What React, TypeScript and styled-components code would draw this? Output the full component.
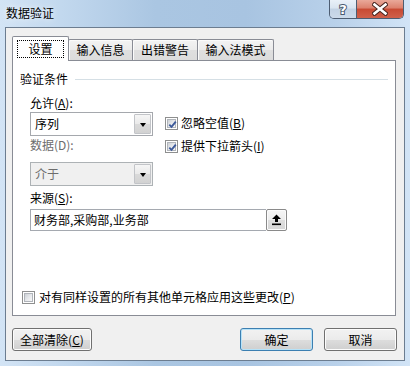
import React from "react";
import styled, { createGlobalStyle } from "styled-components";

const GlobalStyle = createGlobalStyle`
  html, body { margin: 0; padding: 0; }
  body {
    font-family: "Noto Sans CJK SC", "Noto Sans", sans-serif;
    font-size: 12px;
    color: #000;
  }
  * { box-sizing: border-box; }
`;

const Window = styled.div`
  width: 410px;
  height: 366px;
  display: flex;
  flex-direction: column;
  padding: 0 5px 5px 5px;
  background: linear-gradient(
    to right,
    #d3e4f5 0%,
    #c2d8ee 15%,
    #aac6e2 38%,
    #a8c4e1 60%,
    #b9d1ea 82%,
    #d2e4f6 100%
  );
`;

const TitleBar = styled.div`
  height: 27px;
  display: flex;
  align-items: flex-start;
  flex-shrink: 0;
`;

const Title = styled.div`
  margin-top: 5px;
  padding-left: 1px;
  line-height: 16px;
  font-size: 12px;
  color: #000;
  text-shadow: 0 0 6px rgba(255, 255, 255, 0.9);
`;

const CaptionGroup = styled.div`
  margin-left: auto;
  margin-right: 1px;
  display: flex;
  height: 19px;
  border: 1px solid #4d5d72;
  border-top: none;
  border-radius: 0 0 5px 5px;
  overflow: hidden;
`;

const HelpButton = styled.div`
  width: 27px;
  height: 100%;
  display: flex;
  align-items: center;
  justify-content: center;
  border-right: 1px solid #4d5d72;
  background: linear-gradient(#e9f0f8 0%, #d9e4f0 45%, #c2d2e4 50%, #ccdaea 100%);
`;

const CloseButton = styled.div`
  width: 46px;
  height: 100%;
  display: flex;
  align-items: center;
  justify-content: center;
  background: linear-gradient(#e9a899 0%, #dc806d 45%, #c84a33 50%, #d0604a 100%);
`;

const Client = styled.div`
  flex: 1;
  display: flex;
  flex-direction: column;
  background: #f0f0f0;
  border: 1px solid #6c7d90;
  padding: 8px 7px 9px 6px;
`;

const TabStrip = styled.div`
  display: flex;
  align-items: flex-end;
  height: 24px;
  position: relative;
  z-index: 1;
`;

const Tab = styled.div<{ $active?: boolean; $w: number }>`
  width: ${(p) => p.$w}px;
  height: ${(p) => (p.$active ? 25 : 21)}px;
  margin-bottom: ${(p) => (p.$active ? -1 : 0)}px;
  margin-left: ${(p) => (p.$active ? 0 : -1)}px;
  border: 1px solid #898c95;
  border-bottom: none;
  border-radius: 2px 2px 0 0;
  display: flex;
  justify-content: center;
  align-items: ${(p) => (p.$active ? "flex-start" : "center")};
  padding-top: ${(p) => (p.$active ? 3 : 0)}px;
  line-height: 16px;
  background: ${(p) =>
    p.$active ? "#ffffff" : "linear-gradient(#f3f3f3 0%, #ebebeb 50%, #dfdfdf 51%, #dcdcdc 100%)"};
  box-shadow: ${(p) => (p.$active ? "none" : "inset 1px 1px 0 #fbfbfb")};
  position: relative;
  z-index: ${(p) => (p.$active ? 2 : 1)};
`;

const FocusRect = styled.div`
  width: 47px;
  height: 18px;
  border: 1px dotted #000;
  display: flex;
  align-items: center;
  justify-content: center;
  line-height: 16px;
`;

const Panel = styled.div`
  width: 384px;
  height: 256px;
  background: #fff;
  border: 1px solid #898c95;
  padding: 10px 7px 0 7px;
  display: flex;
  flex-direction: column;
`;

const GroupHeader = styled.div`
  display: flex;
  align-items: center;
  height: 16px;
  line-height: 16px;
`;

const GroupLine = styled.div`
  flex: 1;
  height: 1px;
  margin-left: 7px;
  background: #d5dfe5;
`;

const GroupBody = styled.div`
  margin-left: 10px;
  width: 257px;
  display: flex;
  flex-direction: column;
`;

const TopArea = styled.div`
  display: flex;
  margin-top: 8px;
`;

const LeftCol = styled.div`
  width: 123px;
  display: flex;
  flex-direction: column;
`;

const Label = styled.div<{ $disabled?: boolean; $mt?: number }>`
  height: 16px;
  line-height: 16px;
  margin-top: ${(p) => p.$mt ?? 0}px;
  color: ${(p) => (p.$disabled ? "#6d6d6d" : "#000")};
  white-space: nowrap;
`;

const SelectBox = styled.div<{ $disabled?: boolean; $mt: number }>`
  margin-top: ${(p) => p.$mt}px;
  height: 24px;
  display: flex;
  border: 1px solid ${(p) => (p.$disabled ? "#adb2b5" : "#a5a8ad")};
  background: ${(p) => (p.$disabled ? "#f0f0f0" : "#fff")};
  color: ${(p) => (p.$disabled ? "#6d6d6d" : "#000")};
`;

const SelectValue = styled.div`
  flex: 1;
  padding-left: 4px;
  line-height: 22px;
`;

const DropButton = styled.div`
  width: 17px;
  margin: 1px;
  border: 1px solid #c2c4c8;
  border-radius: 1px;
  background: linear-gradient(#f6f6f6 0%, #e9e9e9 50%, #dadada 51%, #d2d2d2 100%);
  display: flex;
  align-items: center;
  justify-content: center;
`;

const Arrow = styled.div`
  width: 0;
  height: 0;
  border-left: 3.5px solid transparent;
  border-right: 3.5px solid transparent;
  border-top: 4px solid #000;
  margin-top: 1px;
`;

const CheckCol = styled.div`
  margin-left: 12px;
  padding-top: 20px;
  display: flex;
  flex-direction: column;
  gap: 7px;
`;

const CheckRow = styled.div<{ $gap: number }>`
  display: flex;
  align-items: center;
  height: 16px;
  line-height: 16px;
  gap: ${(p) => p.$gap}px;
  white-space: nowrap;
`;

const BoxOuter = styled.div`
  width: 13px;
  height: 13px;
  border: 1px solid #8e8f8f;
  background: #fff;
  padding: 1px;
  flex-shrink: 0;
`;

const BoxInner = styled.div`
  width: 9px;
  height: 9px;
  border: 1px solid #b0b4ba;
  background: linear-gradient(135deg, #cdd1d6 0%, #e6e8eb 50%, #f8f8f8 100%);
  position: relative;
  display: flex;
  align-items: center;
  justify-content: center;
`;

const SourceRow = styled.div`
  margin-top: 3px;
  display: flex;
  height: 22px;
`;

const SourceField = styled.div`
  flex: 1;
  border: 1px solid #a5a9b0;
  border-right: none;
  background: #fff;
  padding-left: 3px;
  line-height: 20px;
  white-space: nowrap;
`;

const SourceButton = styled.div`
  width: 21px;
  height: 22px;
  border: 1px solid #8a8a8a;
  border-radius: 2px;
  background: linear-gradient(#f6f6f6 0%, #ededed 50%, #dedede 51%, #d6d6d6 100%);
  box-shadow: inset 0 0 0 1px #fbfbfb;
  display: flex;
  align-items: center;
  justify-content: center;
`;

const BottomCheck = styled.div`
  margin-top: auto;
  margin-bottom: 10px;
  margin-left: 2px;
`;

const ButtonRow = styled.div`
  margin-top: 12px;
  display: flex;
  gap: 11px;
`;

const Button = styled.div<{ $default?: boolean; $w: number; $push?: boolean }>`
  width: ${(p) => p.$w}px;
  height: 23px;
  margin-left: ${(p) => (p.$push ? "auto" : "0")};
  border: 1px solid ${(p) => (p.$default ? "#3c7fb1" : "#707070")};
  border-radius: 3px;
  background: linear-gradient(#f2f2f2 0%, #ebebeb 50%, #dddddd 51%, #cfcfcf 100%);
  box-shadow: inset 0 0 0 1px ${(p) => (p.$default ? "#b6e2f8" : "#fcfcfc")};
  display: flex;
  align-items: center;
  justify-content: center;
  line-height: 16px;
`;

const Check: React.FC<{ checked?: boolean }> = ({ checked }) => (
  <BoxOuter>
    <BoxInner>
      {checked && (
        <svg width="9" height="9" viewBox="0 0 9 9" style={{ position: "absolute", left: 0, top: 0 }}>
          <path d="M1.3 4.6 L3.5 6.9 L7.8 1.6" fill="none" stroke="#3d5a9a" strokeWidth="1.9" />
        </svg>
      )}
    </BoxInner>
  </BoxOuter>
);

const Select: React.FC<{ value: string; disabled?: boolean; mt: number }> = ({ value, disabled, mt }) => (
  <SelectBox $disabled={disabled} $mt={mt}>
    <SelectValue>{value}</SelectValue>
    <DropButton>
      <Arrow />
    </DropButton>
  </SelectBox>
);

export default function App() {
  return (
    <>
      <GlobalStyle />
      <Window>
        <TitleBar>
          <Title>数据验证</Title>
          <CaptionGroup>
            <HelpButton>
              <svg width="14" height="16" viewBox="0 0 14 16">
                <text
                  x="7"
                  y="13"
                  textAnchor="middle"
                  fontFamily="'DejaVu Sans', sans-serif"
                  fontWeight="bold"
                  fontSize="13"
                  fill="#ffffff"
                  stroke="#4a5a70"
                  strokeWidth="2"
                  paintOrder="stroke"
                >
                  ?
                </text>
              </svg>
            </HelpButton>
            <CloseButton>
              <svg width="16" height="14" viewBox="0 0 16 14">
                <path d="M2.5 2.5 L13.5 11.5 M13.5 2.5 L2.5 11.5" stroke="#4a2620" strokeWidth="4.6" strokeLinecap="square" />
                <path d="M2.5 2.5 L13.5 11.5 M13.5 2.5 L2.5 11.5" stroke="#ffffff" strokeWidth="2.6" strokeLinecap="square" />
              </svg>
            </CloseButton>
          </CaptionGroup>
        </TitleBar>
        <Client>
          <TabStrip>
            <Tab $active $w={57}>
              <FocusRect>设置</FocusRect>
            </Tab>
            <Tab $w={65}>输入信息</Tab>
            <Tab $w={66}>出错警告</Tab>
            <Tab $w={77}>输入法模式</Tab>
          </TabStrip>
          <Panel>
            <GroupHeader>
              <span>验证条件</span>
              <GroupLine />
            </GroupHeader>
            <GroupBody>
              <TopArea>
                <LeftCol>
                  <Label>
                    允许(<u>A</u>):
                  </Label>
                  <Select value="序列" mt={1} />
                  <Label $disabled $mt={1}>
                    数据(D):
                  </Label>
                  <Select value="介于" disabled mt={9} />
                </LeftCol>
                <CheckCol>
                  <CheckRow $gap={3}>
                    <Check checked />
                    <span>
                      忽略空值(<u>B</u>)
                    </span>
                  </CheckRow>
                  <CheckRow $gap={3}>
                    <Check checked />
                    <span>
                      提供下拉箭头(<u>I</u>)
                    </span>
                  </CheckRow>
                </CheckCol>
              </TopArea>
              <Label $mt={4}>
                来源(<u>S</u>):
              </Label>
              <SourceRow>
                <SourceField>财务部,采购部,业务部</SourceField>
                <SourceButton>
                  <svg width="11" height="12" viewBox="0 0 11 12">
                    <path d="M5.5 0.5 L10 5 L7 5 L7 8 L4 8 L4 5 L1 5 Z" fill="#000" />
                    <rect x="1" y="9.5" width="9" height="1.6" fill="#000" />
                  </svg>
                </SourceButton>
              </SourceRow>
            </GroupBody>
            <BottomCheck>
              <CheckRow $gap={4}>
                <Check />
                <span>
                  对有同样设置的所有其他单元格应用这些更改(<u>P</u>)
                </span>
              </CheckRow>
            </BottomCheck>
          </Panel>
          <ButtonRow>
            <Button $w={80}>
              <span>
                全部清除(<u>C</u>)
              </span>
            </Button>
            <Button $w={73} $default $push>
              确定
            </Button>
            <Button $w={73}>取消</Button>
          </ButtonRow>
        </Client>
      </Window>
    </>
  );
}
